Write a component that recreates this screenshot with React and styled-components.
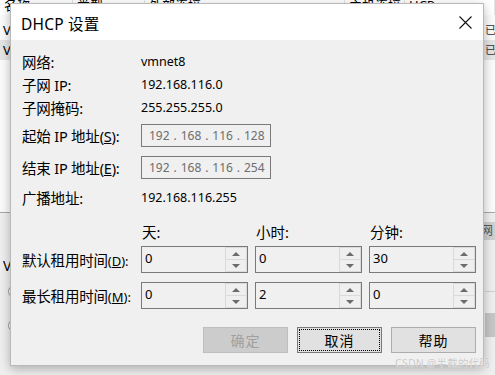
import React from 'react'
import styled, { createGlobalStyle } from 'styled-components'

const GlobalStyle = createGlobalStyle`
  html, body {
    margin: 0;
    padding: 0;
  }
  body {
    width: 495px;
    height: 375px;
    overflow: hidden;
    background: #f0f0f0;
    font-family: "Noto Sans", "Noto Sans CJK SC", sans-serif;
    color: #000;
  }
`;

const Page = styled.div`
    position: relative;
    width: 495px;
    height: 375px;
    overflow: hidden;
`;

/* ---------- window behind the dialog ---------- */

const BackWindow = styled.div`
    display: flex;
    flex-direction: column;
    width: 100%;
    height: 100%;
`;

const ListPane = styled.div`
    height: 212px;
    background: #fbfbfb;
    border-bottom: 1px solid #a8a8a8;
    display: flex;
    flex-direction: column;
`;

const ListHeader = styled.div`
    display: flex;
    height: 20px;
    margin-top: -5px;
    background: #fff;
    font-size: 13px;
    line-height: 20px;
`;

const HeaderCell = styled.div`
    width: ${p => p.w}px;
    flex: none;
    padding-left: 4px;
    box-sizing: border-box;
    border-right: 1px solid #e3e3e3;
    white-space: nowrap;
    overflow: hidden;
`;

const ListBody = styled.div`
    margin-top: 5px;
    display: flex;
    flex-direction: column;
`;

const ListRow = styled.div`
    display: flex;
    justify-content: space-between;
    height: 20px;
    line-height: 20px;
    font-size: 13px;
    padding: 0 0 0 3px;
    background: ${p => (p.selected ? '#e5e5e5' : 'transparent')};
    white-space: nowrap;
`;

const RowMark = styled.span`
    width: 10px;
    overflow: hidden;
    font-size: 11px;
    color: #333;
`;

const LowerPane = styled.div`
    flex: 1;
    background: #efefef;
    display: flex;
    flex-direction: column;
    padding-top: 9px;
`;

const SideButtonRow = styled.div`
    display: flex;
    justify-content: flex-end;
    height: 18px;
`;

const SideButton = styled.div`
    width: 14px;
    background: #cfcfcf;
    border-left: 1px solid #b0b0b0;
    font-size: 12px;
    line-height: 18px;
    color: #555;
    overflow: hidden;
    white-space: nowrap;
`;

const PaneLabel = styled.div`
    margin-top: 17px;
    padding-left: 3px;
    font-size: 14px;
    line-height: 18px;
`;

const RadioLine = styled.div`
    display: flex;
    align-items: center;
    justify-content: space-between;
    height: 24px;
    margin-top: ${p => p.gap}px;
    padding-left: 8px;
`;

const Radio = styled.span`
    width: 11px;
    height: 11px;
    border-radius: 50%;
    border: 1px solid #9a9a9a;
    background: #fff;
`;

const SideBar = styled.span`
    width: 10px;
    height: ${p => p.h}px;
    background: ${p => p.c};
`;

/* ---------- dialog ---------- */

const Dialog = styled.div`
    position: absolute;
    left: 10px;
    top: 3px;
    width: 474px;
    height: 363px;
    box-sizing: border-box;
    background: #f0f0f0;
    border: 1px solid #b9b9b9;
    box-shadow: 0 3px 10px rgba(0, 0, 0, 0.28);
    display: flex;
    flex-direction: column;
`;

const TitleBar = styled.div`
    height: 36px;
    background: #fff;
    display: flex;
    align-items: center;
    justify-content: space-between;
    padding: 0 11px 0 10px;
    flex: none;
`;

const Title = styled.div`
    font-size: 15.5px;
    letter-spacing: 0.2px;
    margin-top: 2px;
`;

const CloseIcon = styled.svg`
    width: 13px;
    height: 13px;
    margin-top: 1px;
`;

const Body = styled.div`
    padding: 10px 7px 0 11px;
    display: flex;
    flex-direction: column;
`;

const InfoRow = styled.div`
    display: grid;
    grid-template-columns: 119px 1fr;
    align-items: center;
    height: ${p => p.h || 23}px;
    margin-top: ${p => p.gap || 0}px;
`;

const Label = styled.span`
    font-size: 14.5px;
    white-space: nowrap;
    letter-spacing: -0.2px;
`;

const Mnemonic = styled.span`
    font-size: 13px;
    letter-spacing: 0;
`;

const Value = styled.span`
    font-size: 12.5px;
`;

const IpBox = styled.div`
    width: 130px;
    height: 23px;
    box-sizing: border-box;
    border: 1px solid #7a7a7a;
    background: #f0f0f0;
    color: #6e6e6e;
    font-size: 12px;
    line-height: 21px;
    padding-left: 7px;
    word-spacing: 0.8px;
    white-space: pre;
`;

const LeaseGrid = styled.div`
    display: grid;
    grid-template-columns: 112px 107px 107px 107px;
    column-gap: 7px;
    margin-top: 14px;
`;

const ColHead = styled.span`
    font-size: 14.5px;
    height: 20px;
    line-height: 20px;
    padding-left: 1px;
`;

const LeaseLabel = styled.span`
    font-size: 14.5px;
    white-space: nowrap;
    letter-spacing: -0.2px;
    align-self: center;
    margin-top: ${p => p.gap}px;
`;

const SpinBox = styled.div`
    display: flex;
    height: 27px;
    box-sizing: border-box;
    border: 1px solid #7a7a7a;
    background: #f0f0f0;
    margin-top: ${p => p.gap}px;
`;

const SpinText = styled.div`
    flex: 1;
    font-size: 13px;
    line-height: 18px;
    padding: 2px 0 0 3px;
`;

const SpinButtons = styled.div`
    width: 21px;
    display: flex;
    flex-direction: column;
    border-left: 1px solid #d9d9d9;
`;

const SpinButton = styled.div`
    flex: 1;
    display: flex;
    align-items: center;
    justify-content: center;
    border: 1px solid #dadada;
    border-left: none;
    border-top: ${p => (p.down ? 'none' : '1px solid #dadada')};
    background: #efefef;
`;

const Arrow = styled.span`
    width: 0;
    height: 0;
    border-left: 4px solid transparent;
    border-right: 4px solid transparent;
    ${p => (p.down ? 'border-top: 4px solid #6b6b6b;' : 'border-bottom: 4px solid #6b6b6b;')}
`;

const ButtonRow = styled.div`
    display: flex;
    justify-content: flex-end;
    gap: 9px;
    margin-top: 18px;
`;

const Button = styled.div`
    position: relative;
    width: 85px;
    height: 26px;
    box-sizing: border-box;
    display: flex;
    align-items: center;
    justify-content: center;
    font-size: 14px;
    letter-spacing: 1px;
    background: ${p => (p.disabled ? '#cccccc' : '#e1e1e1')};
    border: 1px solid ${p => (p.disabled ? '#bfbfbf' : p.focused ? '#7a7a7a' : '#adadad')};
    color: ${p => (p.disabled ? '#a0a0a0' : '#000')};

    ${p => p.focused && `
        &::after {
            content: '';
            position: absolute;
            inset: 1px;
            border: 1px dotted #000;
        }
    `}
`;

const Watermark = styled.div`
    position: absolute;
    right: 5px;
    bottom: 6px;
    font-size: 10.5px;
    line-height: 12px;
    color: #c9c9c9;
    text-shadow: 0 0 1px #fff;
    letter-spacing: 0.2px;
`;

const Spinner = ({ value, gap }) => (
    <SpinBox gap={gap}>
        <SpinText>{value}</SpinText>
        <SpinButtons>
            <SpinButton><Arrow /></SpinButton>
            <SpinButton down><Arrow down /></SpinButton>
        </SpinButtons>
    </SpinBox>
)

export default function App() {
    return (
        <Page>
            <GlobalStyle />
            <BackWindow>
                <ListPane>
                    <ListHeader>
                        <HeaderCell w={73}>名称</HeaderCell>
                        <HeaderCell w={72}>类型</HeaderCell>
                        <HeaderCell w={200}>外部连接</HeaderCell>
                        <HeaderCell w={60}>主机连接</HeaderCell>
                        <HeaderCell w={90}>HCP</HeaderCell>
                    </ListHeader>
                    <ListBody>
                        <ListRow>VMnet0<RowMark>已启用</RowMark></ListRow>
                        <ListRow selected>VMnet8<RowMark>已启用</RowMark></ListRow>
                    </ListBody>
                </ListPane>
                <LowerPane>
                    <SideButtonRow><SideButton>网</SideButton></SideButtonRow>
                    <PaneLabel>VMnet 信息</PaneLabel>
                    <RadioLine gap={4}><Radio /><SideBar h={1} c="#cfcfcf" /></RadioLine>
                    <RadioLine gap={10}><Radio /><SideBar h={24} c="#c6c6c6" /></RadioLine>
                </LowerPane>
            </BackWindow>

            <Dialog>
                <TitleBar>
                    <Title>DHCP 设置</Title>
                    <CloseIcon viewBox="0 0 13 13">
                        <path d="M0.5 0.5 L12.5 12.5 M12.5 0.5 L0.5 12.5" stroke="#111" strokeWidth="1.1" fill="none" />
                    </CloseIcon>
                </TitleBar>
                <Body>
                    <InfoRow>
                        <Label>网络:</Label>
                        <Value>vmnet8</Value>
                    </InfoRow>
                    <InfoRow>
                        <Label>子网 IP:</Label>
                        <Value>192.168.116.0</Value>
                    </InfoRow>
                    <InfoRow>
                        <Label>子网掩码:</Label>
                        <Value>255.255.255.0</Value>
                    </InfoRow>
                    <InfoRow gap={5}>
                        <Label>起始 IP 地址(<u>S</u>):</Label>
                        <IpBox>192 . 168 . 116 . 128</IpBox>
                    </InfoRow>
                    <InfoRow gap={9}>
                        <Label>结束 IP 地址(<u>E</u>):</Label>
                        <IpBox>192 . 168 . 116 . 254</IpBox>
                    </InfoRow>
                    <InfoRow gap={7} h={22}>
                        <Label>广播地址:</Label>
                        <Value>192.168.116.255</Value>
                    </InfoRow>

                    <LeaseGrid>
                        <span />
                        <ColHead>天:</ColHead>
                        <ColHead>小时:</ColHead>
                        <ColHead>分钟:</ColHead>

                        <LeaseLabel gap={4}>默认租用时间<Mnemonic>(<u>D</u>):</Mnemonic></LeaseLabel>
                        <Spinner value="0" gap={4} />
                        <Spinner value="0" gap={4} />
                        <Spinner value="30" gap={4} />

                        <LeaseLabel gap={9}>最长租用时间<Mnemonic>(<u>M</u>):</Mnemonic></LeaseLabel>
                        <Spinner value="0" gap={9} />
                        <Spinner value="2" gap={9} />
                        <Spinner value="0" gap={9} />
                    </LeaseGrid>

                    <ButtonRow>
                        <Button disabled>确定</Button>
                        <Button focused>取消</Button>
                        <Button>帮助</Button>
                    </ButtonRow>
                </Body>
            </Dialog>
            <Watermark>CSDN @半截的代码</Watermark>
        </Page>
    )
}
